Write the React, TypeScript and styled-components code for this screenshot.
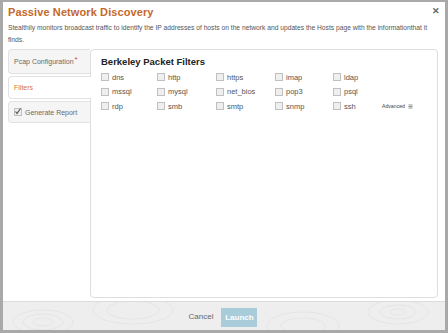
import React from 'react';
import styled, { createGlobalStyle } from 'styled-components';

const GlobalStyle = createGlobalStyle`
    html, body {
        margin: 0;
        padding: 0;
        background: #ffffff;
        font-family: "Liberation Sans", Arial, sans-serif;
    }
`;

const Modal = styled.div`
    width: 448px;
    height: 333px;
    box-sizing: border-box;
    border: 3px solid #a9a9a9;
    border-top-width: 2px;
    background: #ffffff;
    display: flex;
    flex-direction: column;
    position: relative;
`;

const Header = styled.div`
    padding: 3px 3px 0 5px;
`;

const Title = styled.h1`
    margin: 0;
    font-size: 11px;
    font-weight: bold;
    color: #c4692c;
    line-height: 14px;
    letter-spacing: 0.1px;
`;

const Close = styled.span`
    position: absolute;
    top: 4px;
    right: 5px;
    font-size: 9px;
    font-weight: bold;
    color: #666;
`;

const Description = styled.p`
    margin: 3px 0 0 0;
    font-size: 6.7px;
    line-height: 12px;
    color: #555;
`;

const Body = styled.div`
    flex: 1;
    display: flex;
    padding: 3px 7px 3px 5px;
    min-height: 0;
`;

const Tabs = styled.div`
    width: 82px;
    display: flex;
    flex-direction: column;
    gap: 2px;
`;

const Tab = styled.div<{ $active?: boolean; $h: number }>`
    height: ${p => p.$h}px;
    box-sizing: border-box;
    display: flex;
    align-items: center;
    gap: 3px;
    padding-left: 5px;
    border: 1px solid #e2e2e2;
    border-right: none;
    border-radius: 4px 0 0 4px;
    background: ${p => (p.$active ? '#ffffff' : '#f5f5f5')};
    color: ${p => (p.$active ? '#d4763a' : '#6a6a6a')};
    font-size: 7px;
    margin-right: ${p => (p.$active ? '-1px' : '0')};
    position: relative;
    z-index: ${p => (p.$active ? 1 : 0)};
`;

const Star = styled.span`
    color: #e0474c;
    font-size: 8px;
    margin-left: -2px;
    position: relative;
    top: -2px;
`;

const Panel = styled.div`
    flex: 1;
    border: 1px solid #dedede;
    border-radius: 4px;
    padding: 6px 10px;
    position: relative;
`;

const PanelTitle = styled.h2`
    margin: 0 0 4px 0;
    font-size: 9.5px;
    font-weight: bold;
    color: #222;
    line-height: 12px;
`;

const Grid = styled.div`
    display: grid;
    grid-template-columns: 56px 59px 59px 58px 58px;
    row-gap: 4px;
`;

const Item = styled.label`
    display: flex;
    align-items: center;
    gap: 3px;
    height: 10.5px;
    font-size: 7.5px;
    color: #555;
`;

const Box = styled.span`
    width: 6px;
    height: 6px;
    border: 1px solid #c0c0c0;
    background: #efefef;
    display: inline-block;
    position: relative;
    flex-shrink: 0;
`;

const Tick = styled.svg`
    position: absolute;
    left: -1px;
    top: -2px;
`;

const Advanced = styled.span`
    position: absolute;
    right: 24px;
    top: 53px;
    font-size: 5.2px;
    color: #444;
    display: flex;
    align-items: center;
    gap: 3px;
`;

const Footer = styled.div`
    height: 28px;
    border-top: 1px solid #dcdcdc;
    background: #eeeeee;
    display: flex;
    align-items: center;
    justify-content: center;
    gap: 8px;
    position: relative;
    overflow: hidden;
`;

const Texture = styled.svg`
    position: absolute;
    inset: 0;
`;

const CancelLink = styled.span`
    font-size: 8px;
    color: #666;
    position: relative;
    margin-left: -2px;
`;

const LaunchButton = styled.button`
    width: 36px;
    height: 19px;
    border: none;
    background: #a8ccd9;
    color: #ffffff;
    font-family: inherit;
    font-size: 8px;
    font-weight: bold;
    padding: 0;
    margin-top: 2px;
    position: relative;
`;

const filters = [
    'dns', 'http', 'https', 'imap', 'ldap',
    'mssql', 'mysql', 'net_bios', 'pop3', 'psql',
    'rdp', 'smb', 'smtp', 'snmp', 'ssh',
];

const Check = ({ checked }: { checked?: boolean }) => (
    <Box>
        {checked && (
            <Tick width="8" height="8" viewBox="0 0 8 8">
                <path d="M1.5 4.5 L3 6.5 L6.5 1.5" stroke="#555" strokeWidth="1.2" fill="none" />
            </Tick>
        )}
    </Box>
);

export default function App() {
    return (
        <>
            <GlobalStyle />
            <Modal>
                <Close>✕</Close>
                <Header>
                    <Title>Passive Network Discovery</Title>
                    <Description>
                        Stealthily monitors broadcast traffic to identify the IP addresses of hosts on the network and updates the Hosts page with the informationthat it finds.
                    </Description>
                </Header>
                <Body>
                    <Tabs>
                        <Tab $h={25}>Pcap Configuration <Star>*</Star></Tab>
                        <Tab $h={23} $active>Filters</Tab>
                        <Tab $h={22}><Check checked /> Generate Report</Tab>
                    </Tabs>
                    <Panel>
                        <PanelTitle>Berkeley Packet Filters</PanelTitle>
                        <Grid>
                            {filters.map(f => (
                                <Item key={f}>
                                    <Check />
                                    {f}
                                </Item>
                            ))}
                        </Grid>
                        <Advanced>
                            Advanced
                            <svg width="5" height="5" viewBox="0 0 5 5">
                                <path d="M0.5 1 H4.5 M0.5 2.5 H4.5 M0.5 4 H4.5" stroke="#666" strokeWidth="0.7" />
                            </svg>
                        </Advanced>
                    </Panel>
                </Body>
                <Footer>
                    <Texture width="442" height="28" viewBox="0 0 442 28">
                        <g fill="none" stroke="#e2e2e2" strokeWidth="0.8">
                            <ellipse cx="40" cy="20" rx="30" ry="12" />
                            <ellipse cx="40" cy="20" rx="20" ry="8" />
                            <ellipse cx="40" cy="20" rx="10" ry="4" />
                            <ellipse cx="130" cy="8" rx="40" ry="14" />
                            <ellipse cx="130" cy="8" rx="26" ry="9" />
                            <ellipse cx="300" cy="24" rx="36" ry="14" />
                            <ellipse cx="300" cy="24" rx="22" ry="8" />
                            <ellipse cx="395" cy="10" rx="30" ry="12" />
                            <ellipse cx="395" cy="10" rx="18" ry="7" />
                            <ellipse cx="395" cy="10" rx="8" ry="3" />
                        </g>
                    </Texture>
                    <CancelLink>Cancel</CancelLink>
                    <LaunchButton>Launch</LaunchButton>
                </Footer>
            </Modal>
        </>
    );
}
